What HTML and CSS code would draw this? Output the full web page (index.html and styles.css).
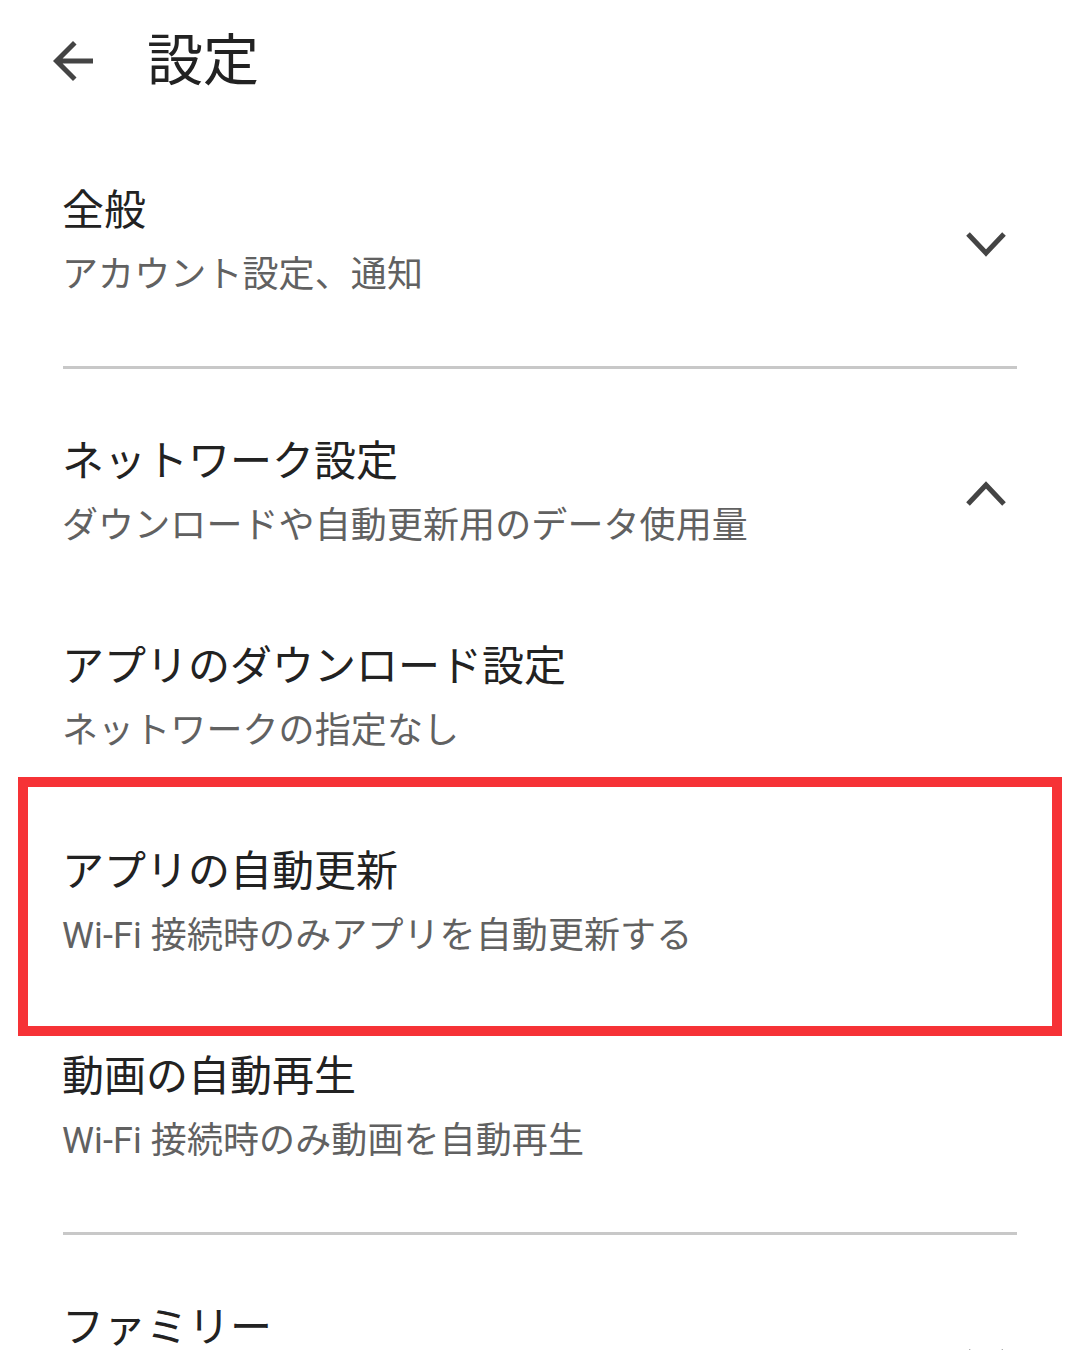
FILE: index.html
```html
<!DOCTYPE html>
<html lang="ja">
<head>
    <meta charset="UTF-8">
    <meta name="viewport" content="width=device-width, initial-scale=1.0">
    <title>設定</title>
    <link rel="stylesheet" href="styles.css">
</head>
<body>
    <header class="topbar">
        <svg class="back" viewBox="0 0 24 24" width="60" height="60">
            <path d="M20 11H7.83l5.59-5.59L12 4l-8 8 8 8 1.41-1.41L7.83 13H20v-2z"/>
        </svg>
        <h1 class="page-title">設定</h1>
    </header>

    <main>
        <!-- 全般 -->
        <section class="group">
            <div class="item">
                <div class="text">
                    <div class="label">全般</div>
                    <div class="sub">アカウント設定、通知</div>
                </div>
                <svg class="chevron" viewBox="0 0 44 28" width="44" height="28">
                    <polyline points="4,5 22,24 40,5"/>
                </svg>
            </div>
        </section>
        <hr class="divider">

        <!-- ネットワーク設定 -->
        <section class="group">
            <div class="item">
                <div class="text">
                    <div class="label">ネットワーク設定</div>
                    <div class="sub">ダウンロードや自動更新用のデータ使用量</div>
                </div>
                <svg class="chevron" viewBox="0 0 44 28" width="44" height="28">
                    <polyline points="4,24 22,5 40,24"/>
                </svg>
            </div>
            <div class="item">
                <div class="text">
                    <div class="label">アプリのダウンロード設定</div>
                    <div class="sub">ネットワークの指定なし</div>
                </div>
            </div>
            <div class="item marked">
                <div class="text">
                    <div class="label">アプリの自動更新</div>
                    <div class="sub">Wi-Fi 接続時のみアプリを自動更新する</div>
                </div>
                <span class="highlight"></span>
            </div>
            <div class="item">
                <div class="text">
                    <div class="label">動画の自動再生</div>
                    <div class="sub">Wi-Fi 接続時のみ動画を自動再生</div>
                </div>
            </div>
        </section>
        <hr class="divider">

        <!-- ファミリー -->
        <section class="group">
            <div class="item">
                <div class="text">
                    <div class="label">ファミリー</div>
                    <div class="sub">&nbsp;</div>
                </div>
                <svg class="chevron" viewBox="0 0 44 28" width="44" height="28">
                    <polyline points="4,5 22,24 40,5"/>
                </svg>
            </div>
        </section>
    </main>
</body>
</html>
```

FILE: styles.css
```css
body {
    margin: 0;
    background: #fff;
    font-family: Roboto, "Noto Sans CJK JP", sans-serif;
    color: #222;
    overflow: hidden;
}
.topbar {
    display: flex;
    align-items: center;
    height: 122px;
    padding-left: 43px;
    margin-bottom: 19px;
}
.back {
    fill: #444;
    flex-shrink: 0;
}
.page-title {
    margin: 0 0 0 44px;
    font-size: 56px;
    font-weight: 400;
    line-height: 64px;
    color: #222;
}
.item {
    position: relative;
    display: flex;
    align-items: center;
    justify-content: space-between;
    padding: 38px 72px 39px 62px;
}
.label {
    font-size: 42px;
    line-height: 64px;
    color: #222;
}
.sub {
    font-size: 36px;
    line-height: 64px;
    color: #616161;
    letter-spacing: 0.1px;
}
.chevron {
    flex-shrink: 0;
    fill: none;
    stroke: #444;
    stroke-width: 5;
}
.divider {
    height: 3px;
    margin: 20px 63px 23px;
    border: none;
    background: #c8c8c8;
}
/* red annotation box */
.highlight {
    position: absolute;
    top: -25px;
    bottom: -29px;
    left: 18px;
    right: 18px;
    border: 10px solid #f63236;
    pointer-events: none;
}
```
